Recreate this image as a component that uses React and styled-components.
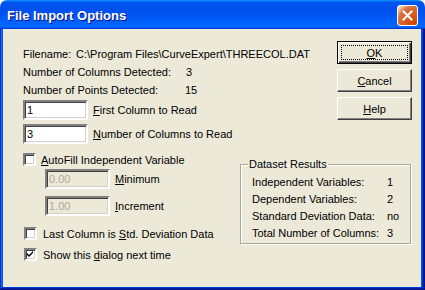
import styled, { createGlobalStyle } from "styled-components";

const GlobalStyle = createGlobalStyle`
  body {
    margin: 0;
    background: #ffffff;
    font-family: "Liberation Sans", Arial, sans-serif;
  }
`;

const Window = styled.div`
  width: 425px;
  height: 290px;
  display: flex;
  flex-direction: column;
  font-family: "Liberation Sans", Arial, sans-serif;
  font-size: 11px;
  color: #000;
`;

const TitleBar = styled.div`
  height: 29px;
  flex: none;
  display: flex;
  align-items: center;
  justify-content: space-between;
  padding: 0 7px 0 7px;
  border-radius: 7px 7px 0 0;
  background: linear-gradient(
    180deg,
    #0997ff,
    #0053ee 8%,
    #0050ee 40%,
    #0066ff 88%,
    #0066ff 93%,
    #005bff 95%,
    #003dd7 96%,
    #003dd7
  );
`;

const Title = styled.div`
  color: #fff;
  font-weight: 700;
  font-size: 13px;
  text-shadow: 1px 1px #0f1089;
  padding-top: 1px;
`;

const CloseButton = styled.div`
  width: 19px;
  height: 19px;
  margin-top: 2px;
  border: 1px solid #fff;
  border-radius: 3px;
  display: flex;
  align-items: center;
  justify-content: center;
  background: radial-gradient(
    circle at 90% 90%,
    #cc4600 0,
    #dc6527 55%,
    #cd7546 70%,
    #ffccb2 90%,
    #fff 100%
  );
`;

const Frame = styled.div`
  flex: 1;
  display: flex;
  padding: 0 4px 3px 3px;
  background: #0855dd;
  box-shadow: inset -1px -1px #00138c, inset 1px 0 #0831d9,
    inset -2px -2px #001ea0, inset 2px 0 #166aee, inset -3px -3px #003bda;
`;

const Client = styled.div`
  flex: 1;
  background: #ece9d8;
  padding: 12px 9px 0 20px;
  display: flex;
  flex-direction: column;
`;

const TopSection = styled.div`
  display: flex;
  justify-content: space-between;
`;

const InfoCol = styled.div`
  display: flex;
  flex-direction: column;
  padding-top: 4px;
`;

const InfoRow = styled.div`
  display: flex;
  height: 18px;
  line-height: 18px;
  white-space: nowrap;
`;

const InfoLabel = styled.span`
  width: ${(p) => p.$w}px;
  flex: none;
`;

const FieldRow = styled.div`
  display: flex;
  align-items: center;
  margin-top: ${(p) => p.$mt}px;
  margin-left: ${(p) => p.$indent || 0}px;
`;

const TextBox = styled.div`
  width: 57px;
  height: 16px;
  padding: 0 2px;
  line-height: 16px;
  border: 2px solid;
  border-color: #808080 #fff #fff #808080;
  box-shadow: inset 1px 1px #404040, inset -1px -1px #d4d0c8;
  background: ${(p) => (p.$disabled ? "#ece9d8" : "#fff")};
  color: ${(p) => (p.$disabled ? "#aca899" : "#000")};
  box-sizing: content-box;
  flex: none;
`;

const FieldLabel = styled.span`
  margin-left: 5px;
  white-space: nowrap;
`;

const ButtonCol = styled.div`
  display: flex;
  flex-direction: column;
  gap: 5px;
`;

const Button = styled.div`
  width: 75px;
  height: 23px;
  box-sizing: border-box;
  display: flex;
  align-items: center;
  justify-content: center;
  background: #ece9d8;
  border: 1px solid;
  border-color: ${(p) =>
    p.$default ? "#000" : "#fff #404040 #404040 #fff"};
  box-shadow: ${(p) =>
    p.$default
      ? "inset 1px 1px #fff, inset -1px -1px #404040, inset -2px -2px #808080"
      : "inset -1px -1px #808080"};
  position: relative;
`;

const FocusRing = styled.span`
  position: absolute;
  inset: 3px;
  border: 1px dotted #000;
`;

const BottomSection = styled.div`
  display: flex;
  margin-top: 9px;
`;

const OptionsCol = styled.div`
  width: 217px;
  flex: none;
  display: flex;
  flex-direction: column;
`;

const CheckRow = styled.div`
  display: flex;
  align-items: center;
  height: 13px;
  margin-top: ${(p) => p.$mt}px;
  margin-left: ${(p) => p.$shift || 0}px;
`;

const CheckBox = styled.div`
  width: 9px;
  height: 9px;
  flex: none;
  border: 2px solid;
  border-color: #808080 #fff #fff #808080;
  box-shadow: inset 1px 1px #404040, inset -1px -1px #d4d0c8;
  background: #fff;
  display: flex;
  align-items: center;
  justify-content: center;
  box-sizing: content-box;
`;

const CheckLabel = styled.span`
  margin-left: ${(p) => p.$gap}px;
  white-space: nowrap;
`;

const GroupBox = styled.fieldset`
  width: 171px;
  height: 86px;
  box-sizing: border-box;
  margin: 5px 0 0 0;
  padding: 3px 0 0 11px;
  border: 1px solid #aca899;
  box-shadow: 1px 1px 0 #fff, inset 1px 1px 0 #fff;
  border-radius: 0;
`;

const Legend = styled.legend`
  padding: 0 1px;
  margin-left: -4px;
  line-height: 13px;
`;

const ResultRow = styled.div`
  display: flex;
  height: 17px;
  line-height: 17px;
  white-space: nowrap;
`;

const ResultLabel = styled.span`
  width: 135px;
  flex: none;
`;

const Check = () => (
  <svg width="7" height="7" viewBox="0 0 7 7">
    <path d="M0 2 L2 4 L6 0 L6 2 L2 6 L0 4 Z" fill="#000" />
  </svg>
);

const CloseX = () => (
  <svg width="11" height="11" viewBox="0 0 11 11">
    <path
      d="M1.5 1.5 L9.5 9.5 M9.5 1.5 L1.5 9.5"
      stroke="#fff"
      strokeWidth="2"
      strokeLinecap="square"
    />
  </svg>
);

const results = [
  ["Independent Variables:", "1"],
  ["Dependent Variables:", "2"],
  ["Standard Deviation Data:", "no"],
  ["Total Number of Columns:", "3"],
];

export default function App() {
  return (
    <>
      <GlobalStyle />
      <Window>
        <TitleBar>
          <Title>File Import Options</Title>
          <CloseButton>
            <CloseX />
          </CloseButton>
        </TitleBar>
        <Frame>
          <Client>
            <TopSection>
              <InfoCol>
                <InfoRow>
                  <InfoLabel $w={53}>Filename:</InfoLabel>
                  <span>C:\Program Files\CurveExpert\THREECOL.DAT</span>
                </InfoRow>
                <InfoRow>
                  <InfoLabel $w={163}>Number of Columns Detected:</InfoLabel>
                  <span>3</span>
                </InfoRow>
                <InfoRow>
                  <InfoLabel $w={162}>Number of Points Detected:</InfoLabel>
                  <span>15</span>
                </InfoRow>
                <FieldRow $mt={1}>
                  <TextBox>1</TextBox>
                  <FieldLabel>
                    <u>F</u>irst Column to Read
                  </FieldLabel>
                </FieldRow>
                <FieldRow $mt={4}>
                  <TextBox>3</TextBox>
                  <FieldLabel>
                    <u>N</u>umber of Columns to Read
                  </FieldLabel>
                </FieldRow>
              </InfoCol>
              <ButtonCol>
                <Button $default>
                  <FocusRing />
                  <span>
                    <u>O</u>K
                  </span>
                </Button>
                <Button>
                  <span>
                    <u>C</u>ancel
                  </span>
                </Button>
                <Button>
                  <span>
                    <u>H</u>elp
                  </span>
                </Button>
              </ButtonCol>
            </TopSection>
            <BottomSection>
              <OptionsCol>
                <CheckRow $mt={0}>
                  <CheckBox />
                  <CheckLabel $gap={5}>
                    <u>A</u>utoFill Independent Variable
                  </CheckLabel>
                </CheckRow>
                <FieldRow $mt={3} $indent={22}>
                  <TextBox $disabled>0.00</TextBox>
                  <FieldLabel>
                    <u>M</u>inimum
                  </FieldLabel>
                </FieldRow>
                <FieldRow $mt={7} $indent={22}>
                  <TextBox $disabled>1.00</TextBox>
                  <FieldLabel>
                    <u>I</u>ncrement
                  </FieldLabel>
                </FieldRow>
                <CheckRow $mt={11} $shift={1}>
                  <CheckBox />
                  <CheckLabel $gap={6}>
                    Last Column is <u>S</u>td. Deviation Data
                  </CheckLabel>
                </CheckRow>
                <CheckRow $mt={8} $shift={1}>
                  <CheckBox>
                    <Check />
                  </CheckBox>
                  <CheckLabel $gap={6}>
                    Show this <u>d</u>ialog next time
                  </CheckLabel>
                </CheckRow>
              </OptionsCol>
              <GroupBox>
                <Legend>Dataset Results</Legend>
                {results.map(([label, value]) => (
                  <ResultRow key={label}>
                    <ResultLabel>{label}</ResultLabel>
                    <span>{value}</span>
                  </ResultRow>
                ))}
              </GroupBox>
            </BottomSection>
          </Client>
        </Frame>
      </Window>
    </>
  );
}
